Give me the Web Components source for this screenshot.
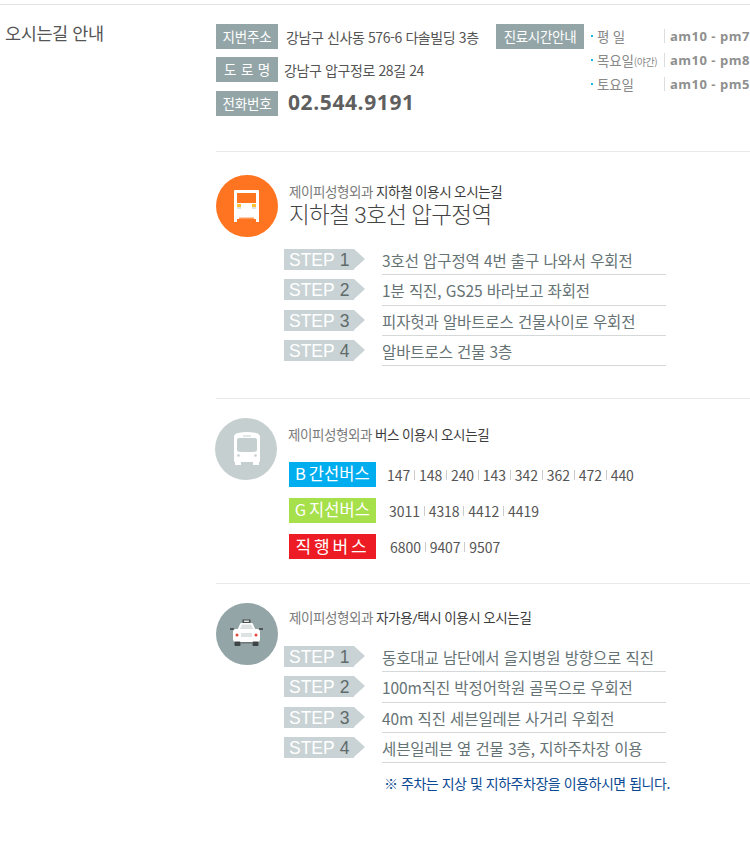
<!DOCTYPE html>
<html lang="ko">
<head>
<meta charset="utf-8">
<style>
html,body{margin:0;padding:0;background:#fff;}
body{font-family:"Noto Sans CJK KR","Noto Sans",sans-serif;color:#555;}
</style>
</head>
<body>
<map-page>
  <info-head></info-head>
  <route-section kind="subway" lead="지하철 이용시 오시는길" title-text="지하철 3호선 압구정역">
    <step-row n="1">3호선 압구정역 4번 출구 나와서 우회전</step-row>
    <step-row n="2">1분 직진, GS25 바라보고 좌회전</step-row>
    <step-row n="3">피자헛과 알바트로스 건물사이로 우회전</step-row>
    <step-row n="4">알바트로스 건물 3층</step-row>
  </route-section>
  <route-section kind="bus" lead="버스 이용시 오시는길">
    <bus-row color="#00aeef" label="B 간선버스" nums="147,148,240,143,342,362,472,440" pad="11"></bus-row>
    <bus-row color="#a6e04a" label="G 지선버스" nums="3011,4318,4412,4419" pad="13"></bus-row>
    <bus-row color="#ed1c24" label="직행버스" nums="6800,9407,9507" pad="14" ls="2.8"></bus-row>
  </route-section>
  <route-section kind="car" lead="자가용/택시 이용시 오시는길">
    <step-row n="1">동호대교 남단에서 을지병원 방향으로 직진</step-row>
    <step-row n="2">100m직진 박정어학원 골목으로 우회전</step-row>
    <step-row n="3">40m 직진 세븐일레븐 사거리 우회전</step-row>
    <step-row n="4">세븐일레븐 옆 건물 3층, 지하주차장 이용</step-row>
    <p class="note" style="margin:10px 0 0 100px;font-size:14px;line-height:20px;color:#0b4a93;letter-spacing:-.47px;white-space:nowrap;">※ 주차는 지상 및 지하주차장을 이용하시면 됩니다.</p>
  </route-section>
</map-page>

<script>
const KR = '"Noto Sans CJK KR","Noto Sans",sans-serif';

class MapPage extends HTMLElement {
  constructor() {
    super();
    this.root = this.attachShadow({ mode: 'open' });
    this.root.innerHTML = `
    <style>
    :host{display:block;width:750px;height:848px;overflow:hidden;font-family:${KR};}
    .top{border-top:1px solid #e4e4e4;margin-top:4px;display:flex;}
    h1{margin:15px 0 0 5px;width:211px;flex:none;font-weight:400;font-size:17.5px;line-height:26px;color:#555;letter-spacing:-.4px;}
    .main{width:534px;flex:none;}
    </style>
    <div class="top">
      <h1>오시는길 안내</h1>
      <div class="main"><slot></slot></div>
    </div>`;
  }
}

class InfoHead extends HTMLElement {
  constructor() {
    super();
    this.root = this.attachShadow({ mode: 'open' });
    this.root.innerHTML = `
    <style>
    :host{display:flex;height:146px;padding-top:19px;box-sizing:border-box;color:#555;}
    .left{width:280px;flex:none;display:flex;flex-direction:column;gap:8px;}
    .row{display:flex;align-items:center;height:25px;white-space:nowrap;}
    .row.tel-row{margin-top:1px;}
    .tag{background:#93a5a7;color:#fff;font-size:13.5px;line-height:24px;height:25px;width:62px;text-align:center;flex:none;letter-spacing:-.2px;}
    .tag.wide{width:88px;letter-spacing:-.3px;}
    .addr{font-size:14px;letter-spacing:-.4px;}
    .tel{font-family:"Open Sans",sans-serif;font-weight:700;font-size:21px;line-height:25px;letter-spacing:.6px;color:#5f5f5f;margin:-3px 0 0 10px;}
    .hours{margin-left:7px;display:flex;flex-direction:column;}
    .h{display:flex;align-items:center;height:24px;white-space:nowrap;color:#888;font-size:13.5px;}
    .dot{width:2px;height:2px;background:#1cb4e6;margin-right:4px;flex:none;}
    .day{width:67px;flex:none;letter-spacing:-.2px;}
    .day small{font-size:10px;letter-spacing:-.4px;}
    .time{border-left:1px solid #ddd;padding-left:5px;font-family:"Open Sans",sans-serif;font-weight:700;font-size:13px;line-height:14px;color:#8f8f8f;letter-spacing:.5px;}
    </style>
    <div class="left">
      <div class="row"><span class="tag">지번주소</span><span class="addr" style="margin-left:8px">강남구 신사동 576-6 다솔빌딩 3층</span></div>
      <div class="row"><span class="tag" style="word-spacing:1px">도 로 명</span><span class="addr" style="margin-left:6px">강남구 압구정로 28길 24</span></div>
      <div class="row tel-row"><span class="tag">전화번호</span><span class="tel">02.544.9191</span></div>
    </div>
    <div class="tag wide">진료시간안내</div>
    <div class="hours">
      <div class="h"><i class="dot"></i><span class="day">평 일</span><span class="time">am10 - pm7</span></div>
      <div class="h"><i class="dot"></i><span class="day">목요일<small>(야간)</small></span><span class="time">am10 - pm8</span></div>
      <div class="h"><i class="dot"></i><span class="day">토요일</span><span class="time">am10 - pm5</span></div>
    </div>`;
  }
}

const ICONS = {
  subway: `<svg width="62" height="62" viewBox="0 0 62 62">
    <circle cx="31" cy="31" r="31" fill="#ff7420"/>
    <path d="M19 15h23q1 0 1 1v31h-3v-3h-19v3h-3v-31q0-1 1-1z" fill="#fff"/>
    <rect x="21" y="18" width="19" height="10" fill="#ff7420"/>
    <rect x="21" y="29" width="4" height="3" fill="#ffc12e"/>
    <rect x="36" y="29" width="4" height="3" fill="#ffc12e"/>
    <rect x="21" y="32" width="4" height="2" fill="#dde3e3"/>
    <rect x="36" y="32" width="4" height="2" fill="#dde3e3"/>
    <rect x="23" y="42.500" width="15" height="1.500" fill="#ff9a5c"/>
  </svg>`,
  bus: `<svg width="62" height="62" viewBox="0 0 62 62">
    <circle cx="31" cy="31" r="31" fill="#c5cfd0"/>
    <path d="M23 15q9-2 18 0q4 .8 4 4v24q0 1-1 1v3h-6v-3h-12v3h-6v-3q-1 0-1-1v-24q0-3.200 4-4z" fill="#fff"/>
    <path d="M24 20h16q2 0 2 2v10q0 1.500-2 1.700q-8 .8-16 0q-2-.2-2-1.700v-10q0-2 2-2z" fill="#c5cfd0"/>
    <rect x="28" y="17.500" width="8" height="1" fill="#c5cfd0"/>
    <circle cx="23.500" cy="37.500" r="1.300" fill="#c5cfd0"/>
    <circle cx="40.500" cy="37.500" r="1.300" fill="#c5cfd0"/>
  </svg>`,
  car: `<svg width="62" height="62" viewBox="0 0 62 62">
    <circle cx="31" cy="31" r="31" fill="#93a5a7"/>
    <rect x="26.500" y="16.500" width="8" height="3.500" fill="#4a4f50"/>
    <rect x="28" y="17.500" width="5" height="1.500" fill="#dfe4e4"/>
    <path d="M21 28l3-7q.4-1 1.500-1h10q1.100 0 1.500 1l3 7z" fill="#fff"/>
    <path d="M24 26l2-4.500h9l2 4.500z" fill="#dbe1e1"/>
    <rect x="14" y="25" width="4" height="2" fill="#4f5657"/>
    <rect x="43" y="25" width="4" height="2" fill="#4f5657"/>
    <rect x="17" y="26" width="27" height="13" rx="3" fill="#fff"/>
    <rect x="18.500" y="38.500" width="6" height="4.500" rx="1" fill="#3f4546"/>
    <rect x="36.500" y="38.500" width="6" height="4.500" rx="1" fill="#3f4546"/>
    <rect x="24" y="39" width="13" height="1.500" fill="#6e7778"/>
    <rect x="25" y="30" width="11" height="4" fill="#dde2e2"/>
    <circle cx="21" cy="32" r="1.500" fill="#e0473a"/>
    <circle cx="40" cy="32" r="1.500" fill="#e0473a"/>
  </svg>`
};

class RouteSection extends HTMLElement {
  constructor() {
    super();
    this.root = this.attachShadow({ mode: 'open' });
  }
  connectedCallback() {
    const kind = this.getAttribute('kind');
    const title = this.getAttribute('title-text');
    this.root.innerHTML = `
    <style>
    :host{display:block;border-top:1px solid #e9e9e9;box-sizing:border-box;}
    :host([kind=subway]){height:247px;padding-top:23px;}
    :host([kind=bus]){height:185px;padding-top:19px;}
    :host([kind=car]){padding-top:19px;}
    .head{display:flex;min-height:44px;}
    .icon{width:62px;height:62px;flex:none;}
    :host([kind=bus]) .icon{margin-left:-1px;}
    svg{display:block;}
    .text{margin-left:11px;padding-top:8px;font-family:Roboto,${KR};}
    :host([kind=car]) .text{padding-top:6px;}
    .lead{font-size:13.500px;line-height:18px;color:#7a7a7a;letter-spacing:-.4px;white-space:nowrap;}
    .lead b{font-weight:400;color:#3c3c3c;}
    .title{margin-top:2px;font-size:22.500px;line-height:24px;font-weight:300;color:#444;letter-spacing:-.6px;white-space:nowrap;}
    .body{margin-left:68px;}
    :host([kind=subway]) .body{margin-top:8px;}
    :host([kind=bus]) .body{margin:-23.500px 0 0 73px;}
    :host([kind=car]) .body{margin-top:-23px;}
    </style>
    <div class="head">
      <div class="icon">${ICONS[kind]}</div>
      <div class="text">
        <div class="lead">제이피성형외과 <b>${this.getAttribute('lead')}</b></div>
        ${title ? `<div class="title">${title}</div>` : ''}
      </div>
    </div>
    <div class="body"><slot></slot></div>`;
  }
}

class StepRow extends HTMLElement {
  constructor() {
    super();
    this.root = this.attachShadow({ mode: 'open' });
  }
  connectedCallback() {
    this.root.innerHTML = `
    <style>
    :host{display:flex;height:30.300px;align-items:flex-start;white-space:nowrap;}
    .step{position:relative;width:70px;height:21px;background:#c9d3d5;margin-top:4px;flex:none;font-family:"Liberation Sans",sans-serif;font-size:17.500px;line-height:22px;color:#fff;padding-left:5px;box-sizing:border-box;}
    .step::after{content:"";position:absolute;left:70px;top:0;border-left:11px solid #c9d3d5;border-top:10.500px solid transparent;border-bottom:10.500px solid transparent;}
    .step b{font-weight:400;color:#5f6a6b;margin-left:5px;}
    .txt{margin-left:28px;width:284px;height:30.300px;box-sizing:border-box;border-bottom:1px solid #d6d9da;font-size:15.500px;line-height:31px;color:#667375;letter-spacing:-.1px;}
    </style>
    <div class="step">STEP<b>${this.getAttribute('n')}</b></div>
    <div class="txt"><slot></slot></div>`;
  }
}

class BusRow extends HTMLElement {
  constructor() {
    super();
    this.root = this.attachShadow({ mode: 'open' });
  }
  connectedCallback() {
    const nums = this.getAttribute('nums').split(',');
    const ls = this.getAttribute('ls');
    this.root.innerHTML = `
    <style>
    :host{display:flex;align-items:center;height:36px;white-space:nowrap;}
    .label{width:87px;height:25px;flex:none;background:${this.getAttribute('color')};color:#fff;font-size:${ls ? 17 : 16.5}px;line-height:23px;text-align:center;letter-spacing:${ls || '.1'}px;word-spacing:-2px;}
    .nums{margin-left:${this.getAttribute('pad')}px;font-size:14px;color:#555;letter-spacing:-.05px;display:flex;align-items:center;}
    i{width:1px;height:10px;background:#ccc;margin:0 3.900px;}
    </style>
    <div class="label">${this.getAttribute('label')}</div>
    <div class="nums">${nums.map(n => `<span>${n}</span>`).join('<i></i>')}</div>`;
  }
}

customElements.define('map-page', MapPage);
customElements.define('info-head', InfoHead);
customElements.define('route-section', RouteSection);
customElements.define('step-row', StepRow);
customElements.define('bus-row', BusRow);
</script>
</body>
</html>
